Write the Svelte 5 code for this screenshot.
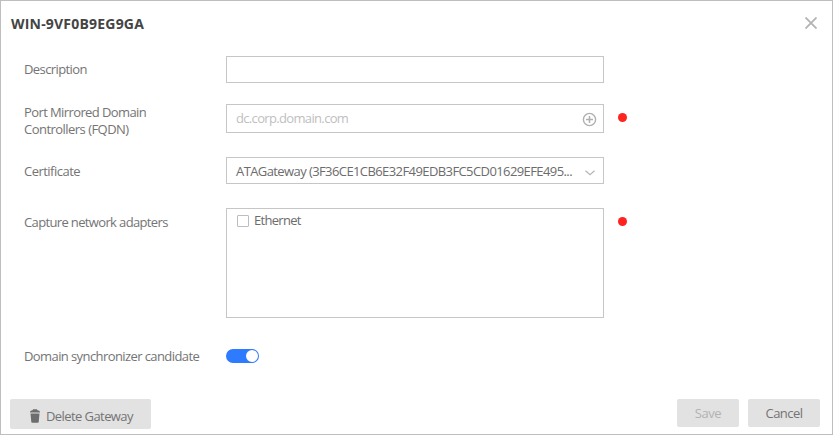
<script>
  let description = $state('');
  let enabled = $state(true);
  let ethernet = $state(false);
</script>

<div class="dialog">
  <header>
    <h1>WIN-9VF0B9EG9GA</h1>
    <button class="close" aria-label="Close">
      <svg width="12" height="12" viewBox="0 0 12 12"><path d="M.5.5 11.5 11.5M11.5.5.5 11.5" fill="none" stroke="#b3b3b3" stroke-width="1.8" /></svg>
    </button>
  </header>

  <main>
    <div class="row desc">
      <div class="label"><span class="t-desc">Description</span></div>
      <input class="box" aria-label="Description" bind:value={description} />
    </div>
    <div class="row fqdn">
      <div class="label"><span class="t-port">Port Mirrored Domain</span><br /><span class="t-ctrl">Controllers (FQDN)</span></div>
      <div class="box field">
        <span class="placeholder">dc.corp.domain.com</span>
        <svg width="15" height="15" viewBox="0 0 15 15"><circle cx="7.5" cy="7.5" r="6.1" fill="none" stroke="#b0b0b0" stroke-width="1.4" /><path d="M7.5 4v7M4 7.5h7" stroke="#b0b0b0" stroke-width="1.5" /></svg>
      </div>
      <i class="dot"></i>
    </div>
    <div class="row cert">
      <div class="label"><span class="t-cert">Certificate</span></div>
      <div class="box field">
        <span class="value">ATAGateway (3F36CE1CB6E32F49EDB3FC5CD01629EFE495...</span>
        <svg class="chevron" width="10" height="6" viewBox="0 0 10 6"><path d="M.5.8 5 4.8 9.5.8" fill="none" stroke="#b5b5b5" stroke-width="1.2" /></svg>
      </div>
    </div>
    <div class="row adapters">
      <div class="label"><span class="t-cap">Capture network adapters</span></div>
      <div class="box list">
        <label><input type="checkbox" bind:checked={ethernet} /><span class="t-eth">Ethernet</span></label>
      </div>
      <i class="dot"></i>
    </div>
    <div class="row sync">
      <div class="label"><span class="t-sync">Domain synchronizer candidate</span></div>
      <button class="toggle" class:off={!enabled} aria-label="Domain synchronizer candidate" onclick={() => (enabled = !enabled)}><i></i></button>
    </div>
  </main>

  <footer>
    <button class="btn delete">
      <svg width="10" height="14" viewBox="0 0 10 14"><path d="M0 3.6V3C0 2 1.2 1.4 2.5 1.2L3.2.3h3.6l.7.9C8.8 1.4 10 2 10 3v.6z" fill="#6d6d6d" /><path d="M.5 4.6h9L8.7 13q-.1.8-1 .8H2.3q-.9 0-1-.8z" fill="#6d6d6d" /></svg>
      <span class="t-del">Delete Gateway</span>
    </button>
    <div class="actions">
      <button class="btn save" disabled><span class="t-save">Save</span></button>
      <button class="btn cancel"><span class="t-cancel">Cancel</span></button>
    </div>
  </footer>
</div>

<style>
  :global(body) { margin: 0; background: #fff; }
  .dialog {
    box-sizing: border-box; width: 833px; height: 435px;
    border: 1px solid #bebebe; background: #fff;
    display: flex; flex-direction: column;
    font: 13px/17px "Open Sans", "Noto Sans", sans-serif; color: #747474;
  }
  button, input { font: inherit; color: inherit; margin: 0; padding: 0; border: 0; background: none; }
  span { white-space: nowrap; }
  svg { display: block; flex: none; }
  header { display: flex; justify-content: space-between; padding: 14px 15px 0 10px; height: 41px; box-sizing: border-box; }
  h1 { margin: 0; font-size: 14px; line-height: 18px; font-weight: 700; color: #444; letter-spacing: .2px; }
  .close { width: 12px; height: 12px; margin-top: 2px; }
  main { flex: 1; padding: 14px 0 0 23px; }
  .row { display: flex; align-items: flex-start; }
  .label { width: 202px; flex: none; }
  .box { box-sizing: border-box; width: 378px; border: 1px solid #c6c6c6; background: #fff; }
  input.box { height: 27px; padding: 0 9px; outline: none; }
  .field { display: flex; align-items: center; justify-content: space-between; }
  .desc { height: 48px; }
  .desc .label { padding-top: 5px; }
  .fqdn { height: 53px; }
  .fqdn .field { height: 29px; padding: 0 6px 0 9px; }
  .placeholder { color: #c0c0c0; }
  .fqdn svg { margin-top: 2px; }
  .cert { height: 51px; }
  .cert .label { padding-top: 6px; }
  .cert .field { height: 27px; padding: 0 8px 0 9px; }
  .value { padding-top: 1px; color: #6c6c6c; }
  .chevron { margin-top: 4px; }
  .adapters { height: 141px; }
  .adapters .label { padding-top: 6px; }
  .list { height: 110px; padding: 3px 10px; }
  .list label { display: flex; align-items: center; gap: 5px; color: #6c6c6c; }
  .list input { appearance: none; box-sizing: border-box; width: 12px; height: 12px; border: 1px solid #bdbdbd; border-radius: 1px; margin-top: 1px; }
  .list input:checked { background: #2d7bff; }
  .dot { width: 9px; height: 9px; border-radius: 50%; background: #ff231f; margin: 9px 0 0 14px; }
  .toggle { width: 33px; height: 14px; border-radius: 7px; background: #2e7bff; display: flex; justify-content: flex-end; align-items: center; padding: 1px; box-sizing: border-box; }
  .toggle i { width: 12px; height: 12px; border-radius: 50%; background: #fff; }
  .toggle.off { background: #aaa; justify-content: flex-start; }
  .sync .label { margin-top: -1px; }
  footer { display: flex; justify-content: space-between; align-items: flex-start; height: 35px; padding: 0 12px 0 9px; }
  .btn { display: flex; align-items: center; justify-content: center; background: #e2e2e2; border-radius: 2px; height: 28px; }
  .delete { width: 141px; height: 30px; justify-content: flex-start; padding: 4px 0 0 20px; box-sizing: border-box; gap: 6px; }
  .actions { display: flex; gap: 9px; }
  .save { width: 62px; color: #b2b2b2; }
  .cancel { width: 72px; }

  .t-desc { letter-spacing: -.6px; }
  .t-port { letter-spacing: -.6px; }
  .t-ctrl { letter-spacing: -.53px; }
  .t-cert { letter-spacing: -.52px; }
  .t-cap { letter-spacing: -.64px; }
  .placeholder { letter-spacing: -.66px; }
  .value { letter-spacing: -.59px; }
  .t-eth { letter-spacing: -.7px; }
  .t-sync { letter-spacing: -.59px; }
  .t-del { letter-spacing: -.58px; }
  .t-save { letter-spacing: -.4px; }
  .t-cancel { letter-spacing: -.55px; }
</style>
